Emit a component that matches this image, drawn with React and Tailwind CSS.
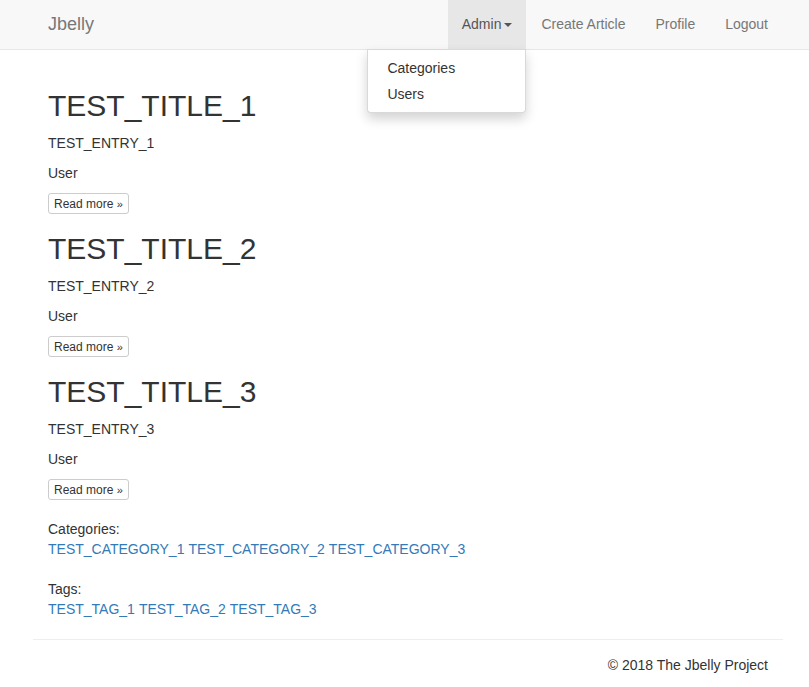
import React from 'react';

const articles = [
  { title: 'TEST_TITLE_1', entry: 'TEST_ENTRY_1', author: 'User' },
  { title: 'TEST_TITLE_2', entry: 'TEST_ENTRY_2', author: 'User' },
  { title: 'TEST_TITLE_3', entry: 'TEST_ENTRY_3', author: 'User' },
];

const categories = ['TEST_CATEGORY_1', 'TEST_CATEGORY_2', 'TEST_CATEGORY_3'];
const tags = ['TEST_TAG_1', 'TEST_TAG_2', 'TEST_TAG_3'];

function Navbar() {
  return (
    <nav className="h-[50px] bg-[#f8f8f8] border-b border-[#e7e7e7]">
      <div className="w-[750px] ml-[33px] px-[15px] flex items-stretch justify-between h-full">
        <a className="text-[18px] leading-[20px] text-[#777] pb-[2px] self-center">Jbelly</a>
        <ul className="flex items-stretch -mr-[15px]">
          <li className="relative">
            <a className="flex items-center h-full pb-[2px] px-[14px] bg-[#e7e7e7] text-[#555]">
              Admin
              <span className="ml-[3px] mt-[2px] w-0 h-0 border-t-[4px] border-t-[#555] border-x-[4px] border-x-transparent" />
            </a>
            {/* dropdown */}
            <ul className="absolute right-0 top-full w-[159px] bg-white border border-black/15 rounded-b-[4px] py-[5px] shadow-[0_6px_12px_rgba(0,0,0,0.175)] z-10">
              <li><a className="block px-[19px] py-[3px] text-[#333]">Categories</a></li>
              <li><a className="block px-[19px] py-[3px] text-[#333]">Users</a></li>
            </ul>
          </li>
          <li><a className="flex items-center h-full pb-[2px] px-[15px] text-[#777]">Create Article</a></li>
          <li><a className="flex items-center h-full pb-[2px] px-[15px] text-[#777]">Profile</a></li>
          <li><a className="flex items-center h-full pb-[2px] px-[15px] text-[#777]">Logout</a></li>
        </ul>
      </div>
    </nav>
  );
}

function Article({ title, entry, author }) {
  return (
    <div>
      <h2 className="text-[30px] leading-[33px] mt-[18px] mb-[11px]">{title}</h2>
      <p className="mb-[10px]">{entry}</p>
      <p className="mb-[10px]">{author}</p>
      <a className="flex w-fit items-center h-[21px] px-[5px] text-[12px] leading-[18px] text-[#333] bg-white border border-[#ccc] rounded-[3px]">
        Read more&nbsp;<span className="text-[11px]">»</span>
      </a>
    </div>
  );
}

export default function App() {
  return (
    <div className="min-h-screen bg-white text-[#333] text-[14px] leading-[20px] font-['Liberation_Sans',Arial,sans-serif]">
      <Navbar />
      <div className="w-[750px] ml-[33px] pt-[21px]">
        <div className="px-[15px]">
          {articles.map((a) => (
            <Article key={a.title} {...a} />
          ))}

          <div className="mt-[19px]">
            <p>Categories:</p>
            <p className="flex gap-[4px] text-[#337ab7]">
              {categories.map((c) => (
                <a key={c}>{c}</a>
              ))}
            </p>
          </div>

          <div className="mt-[20px]">
            <p>Tags:</p>
            <p className="flex gap-[4px] text-[#337ab7]">
              {tags.map((t) => (
                <a key={t}>{t}</a>
              ))}
            </p>
          </div>
        </div>

        <hr className="mt-[20px] border-t border-[#eee]" />

        <footer className="px-[15px] pt-[15px] pb-[12px] text-right">
          <p>© 2018 The Jbelly Project</p>
        </footer>
      </div>
    </div>
  );
}
